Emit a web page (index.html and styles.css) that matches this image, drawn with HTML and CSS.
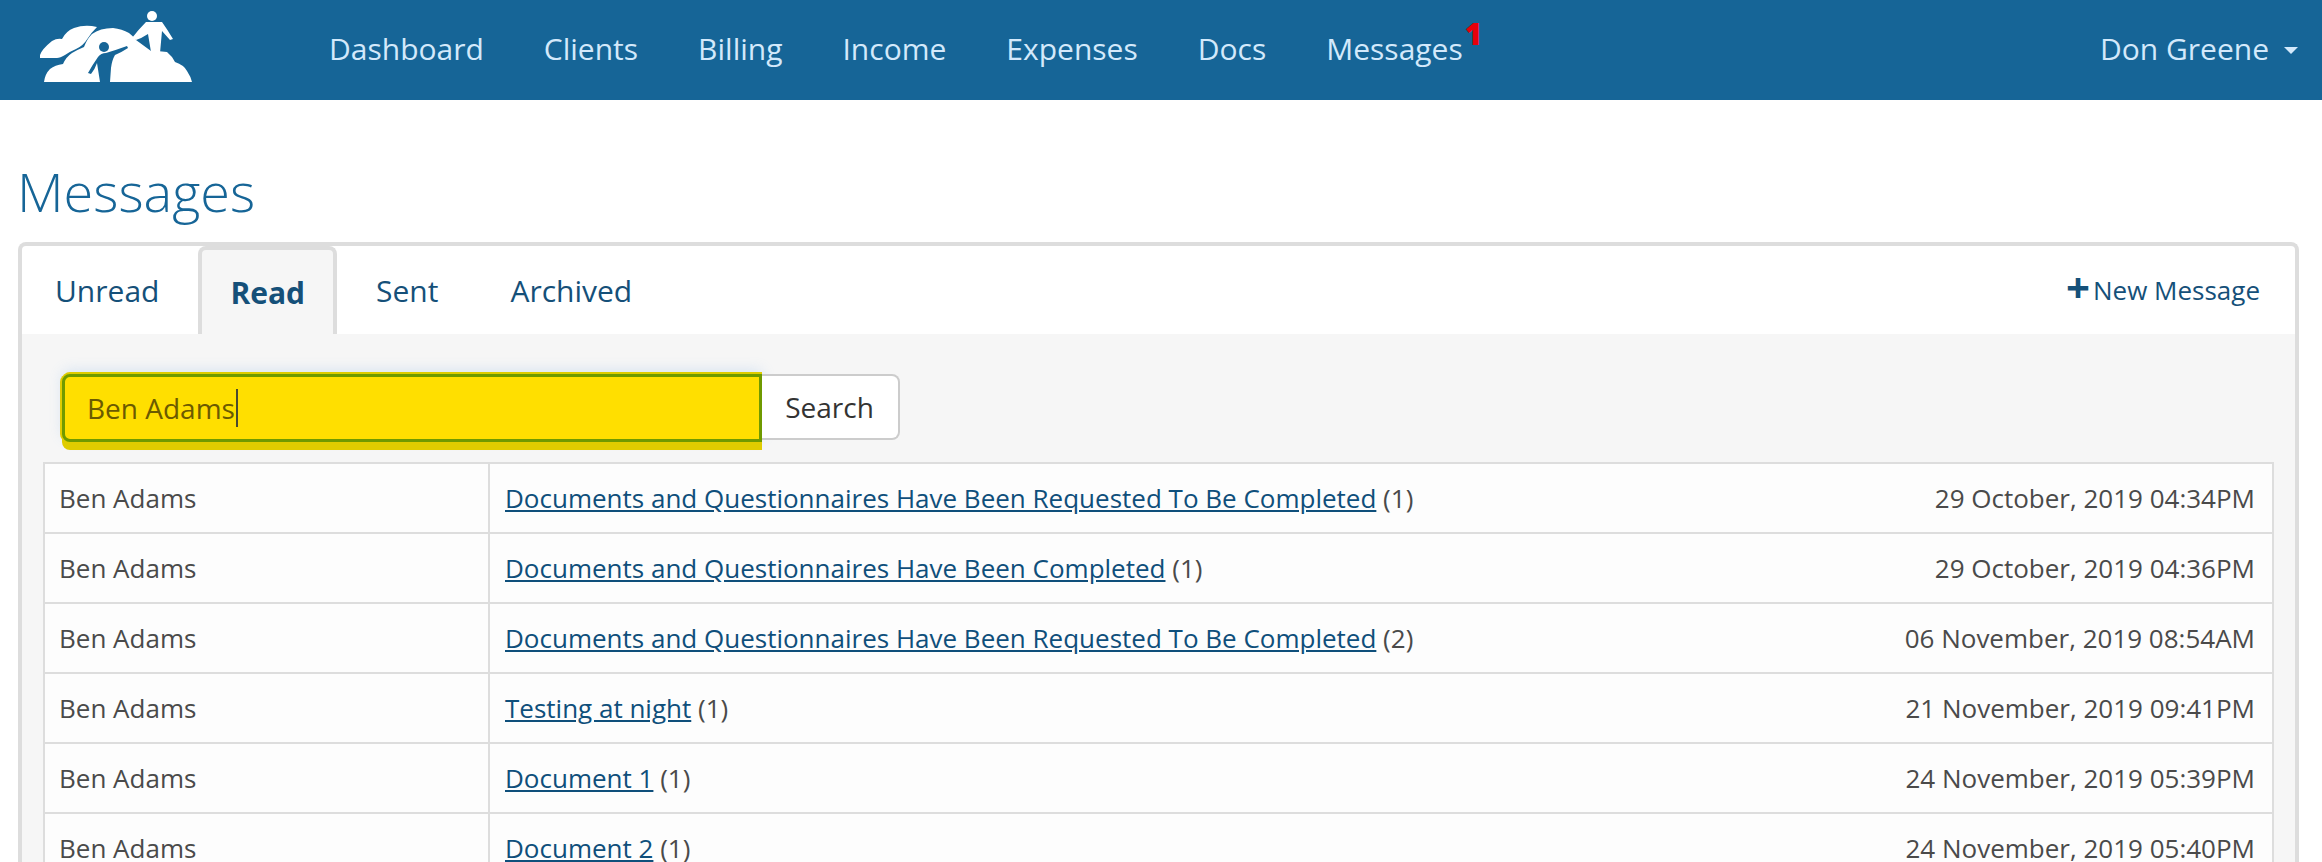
FILE: index.html
```html
<!DOCTYPE html>
<html lang="en">
<head>
  <meta charset="UTF-8" />
  <title>Messages</title>
  <link rel="stylesheet" href="styles.css">
</head>
<body>

<header class="navbar">
  <svg class="logo" viewBox="40 10 154 74" width="154" height="74">
    <path fill="#fff" d="M40 58 L40 55 Q42 49 52 41 Q57 38 62 39 Q66 31 74 28 Q85 24 97 27 Q91 33 88 38 Q83 46 76 49 Q69 52 65 55 Q60 58 57 58 Z"/>
    <path fill="#fff" d="M44 82 Q45 74 50 69 Q55 65 63 64 Q66 57 72 53 Q79 49 84 47 Q87 39 92 34 Q100 28 113 28 Q122 29 129 33 Q133 36 136 40 L151 51 Q160 51 167 52 Q172 56 175 62 Q184 65 187 71 Q191 77 192 82 Z"/>
    <path fill="#166597" d="M127 46 L128 48 Q122 52 115 55 Q112 60 111 68 L110 82 L100 82 L97 63 Q95 69 91 74 L88 73 Q93 64 98 57 Q101 53 106 53 Q116 50 127 46 Z"/>
    <circle fill="#166597" cx="104" cy="47" r="5"/>
    <circle fill="#fff" cx="152" cy="16" r="5"/>
    <path fill="#fff" d="M146 22 L162 22 Q167 29 173 39 L170 40 L162 31 L160 53 L151 52 L148 34 Q142 38 136 40 L132 38 Q139 29 146 22 Z"/>
  </svg>
  <nav class="nav-links">
    <a href="#">Dashboard</a>
    <a href="#">Clients</a>
    <a href="#">Billing</a>
    <a href="#">Income</a>
    <a href="#">Expenses</a>
    <a href="#">Docs</a>
    <a href="#" class="nav-messages">Messages<span class="badge">1</span></a>
  </nav>
  <a href="#" class="user-menu">Don Greene<span class="caret"></span></a>
</header>

<h1 class="page-title">Messages</h1>

<div class="panel">
  <div class="tabs">
    <a href="#" class="tab">Unread</a>
    <a href="#" class="tab active">Read</a>
    <a href="#" class="tab">Sent</a>
    <a href="#" class="tab">Archived</a>
    <a href="#" class="new-message"><span class="plus">+</span>New Message</a>
  </div>
  <div class="panel-body">
    <div class="search-row">
      <div class="search-field">Ben Adams<span class="text-cursor"></span></div>
      <button class="search-btn">Search</button>
    </div>
    <table class="messages">
      <tr>
        <td class="from">Ben Adams</td>
        <td class="subject"><a href="#">Documents and Questionnaires Have Been Requested To Be Completed</a> (1)</td>
        <td class="date">29 October, 2019 04:34PM</td>
      </tr>
      <tr>
        <td class="from">Ben Adams</td>
        <td class="subject"><a href="#">Documents and Questionnaires Have Been Completed</a> (1)</td>
        <td class="date">29 October, 2019 04:36PM</td>
      </tr>
      <tr>
        <td class="from">Ben Adams</td>
        <td class="subject"><a href="#">Documents and Questionnaires Have Been Requested To Be Completed</a> (2)</td>
        <td class="date">06 November, 2019 08:54AM</td>
      </tr>
      <tr>
        <td class="from">Ben Adams</td>
        <td class="subject"><a href="#">Testing at night</a> (1)</td>
        <td class="date">21 November, 2019 09:41PM</td>
      </tr>
      <tr>
        <td class="from">Ben Adams</td>
        <td class="subject"><a href="#">Document 1</a> (1)</td>
        <td class="date">24 November, 2019 05:39PM</td>
      </tr>
      <tr>
        <td class="from">Ben Adams</td>
        <td class="subject"><a href="#">Document 2</a> (1)</td>
        <td class="date">24 November, 2019 05:40PM</td>
      </tr>
    </table>
  </div>
</div>

</body>
</html>
```

FILE: styles.css
```css
html, body {
  height: 862px;
  overflow: hidden;
}
body {
  margin: 0;
  background: #fff;
  color: #4a4a4a;
  font-family: "Open Sans", sans-serif;
  font-size: 26px;
}
a {
  text-decoration: none;
}

.navbar {
  display: flex;
  align-items: center;
  height: 100px;
  padding: 0 24px 0 40px;
  background: #166597;
}
.logo {
  flex: none;
  filter: blur(0.7px);
  align-self: flex-start;
  margin-top: 10px;
}
.nav-links {
  display: flex;
  gap: 60px;
  margin-left: 135px;
}
.navbar a {
  color: #d3e9fb;
  font-size: 30px;
  line-height: 38px;
  margin-bottom: 3px;
}
.nav-messages {
  position: relative;
}
.badge {
  position: absolute;
  left: 100%;
  top: -15px;
  margin-left: 2px;
  color: #e8000b;
  font-size: 30px;
  font-weight: 800;
}
.user-menu {
  margin-left: auto;
  display: flex;
  align-items: center;
}
.caret {
  width: 0;
  height: 0;
  margin-left: 15px;
  margin-top: 4px;
  border-left: 7.5px solid transparent;
  border-right: 7.5px solid transparent;
  border-top: 7.5px solid #d3e9fb;
}

.page-title {
  margin: 0;
  padding: 55px 0 0 17px;
  height: 87px;
  color: #166597;
  font-size: 54px;
  font-weight: 300;
  line-height: 72px;
}

.panel {
  margin: 0 23px 0 18px;
  border: 4px solid #ddd;
  border-bottom: none;
  border-radius: 8px 8px 0 0;
  background: #fff;
}
.tabs {
  display: flex;
  align-items: stretch;
  height: 88px;
}
.tab {
  display: flex;
  align-items: center;
  padding: 0 32px;
  margin-right: 8px;
  color: #155079;
  font-size: 30px;
}
.tab:first-child {
  padding: 0 31px 0 33px;
}
.tab.active {
  padding: 0 28px;
  margin: 0 7px 0 0;
  border: 4px solid #ddd;
  border-bottom: none;
  border-radius: 8px 8px 0 0;
  background: #f6f6f6;
  font-weight: 700;
}
.new-message {
  margin-left: auto;
  align-self: center;
  padding-right: 35px;
  color: #155079;
  font-size: 26px;
}
.plus {
  margin-right: 3px;
  font-size: 42px;
  font-weight: 700;
  line-height: 26px;
  vertical-align: -3px;
}

.panel-body {
  padding: 40px 21px 0;
  background: #f6f6f6;
  height: 530px;
}
.search-row {
  display: flex;
  align-items: flex-start;
  margin-bottom: 20px;
  padding-left: 19px;
}
.search-field {
  box-sizing: border-box;
  display: flex;
  align-items: center;
  width: 700px;
  height: 68px;
  padding-left: 22px;
  border: 3px solid #6f9a00;
  border-radius: 8px 0 0 8px;
  background: #ffdf00;
  box-shadow: 0 8px 0 #dfcc00, -2px 0 0 #dfcc00, 0 -2px 0 #dfcc00, 0 -4px 14px rgba(100, 160, 230, 0.2);
  color: #6b5a00;
  font-size: 28px;
}
.text-cursor {
  width: 2px;
  height: 38px;
  margin-left: 1px;
  background: #4a4a30;
}
.search-btn {
  height: 66px;
  width: 138px;
  padding-right: 7px;
  border: 2px solid #ccc;
  border-left: none;
  border-radius: 0 8px 8px 0;
  background: #fff;
  color: #333;
  font-family: inherit;
  font-size: 28px;
}

.messages {
  width: 2231px;
  border-collapse: collapse;
  background: #fdfdfd;
  font-size: 26px;
}
.messages td {
  height: 68px;
  padding: 0 15px;
  border: 2px solid #ddd;
}
.messages .from {
  width: 414px;
  padding-left: 14px;
}
.messages .subject {
  border-right: none;
}
.messages a {
  color: #0f4f7b;
  text-decoration: underline;
}
.messages .date {
  border-left: none;
  text-align: right;
  padding-right: 17px;
}
```
